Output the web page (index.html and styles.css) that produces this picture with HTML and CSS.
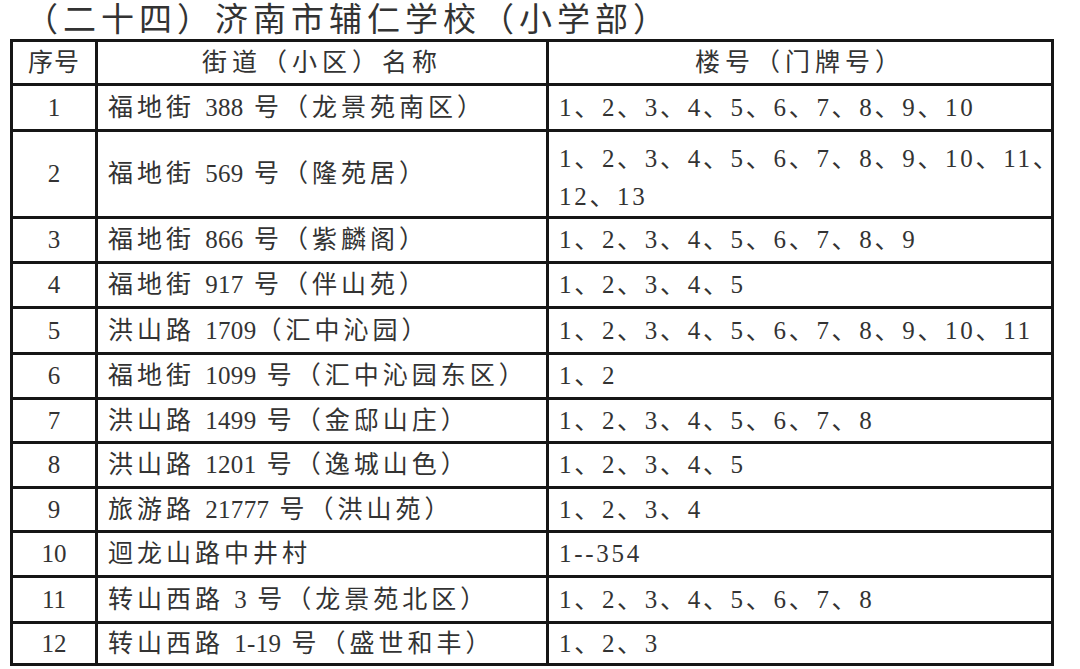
FILE: index.html
```html
<!DOCTYPE html>
<html lang="zh-CN">
<head>
<meta charset="utf-8">
<title>济南市辅仁学校（小学部）</title>
<link rel="stylesheet" href="styles.css">
</head>
<body>
<h1 class="title">（二十四）济南市辅仁学校（小学部）</h1>
<table class="grid">
  <colgroup><col class="c-no"><col class="c-name"><col class="c-bld"></colgroup>
  <thead>
    <tr class="h44"><th class="no hd-no">序号</th><th class="hd">街道（小区）名称</th><th class="hd">楼号（门牌号）</th></tr>
  </thead>
  <tbody>
    <tr class="h46"><td class="no">1</td><td class="name">福地街 <span class="n">388</span> 号（龙景苑南区）</td><td class="bld">1、2、3、4、5、6、7、8、9、10</td></tr>
    <tr class="h87"><td class="no">2</td><td class="name">福地街 <span class="n">569</span> 号（隆苑居）</td><td class="bld two">1、2、3、4、5、6、7、8、9、10、11、<br>12、13</td></tr>
    <tr class="h45"><td class="no">3</td><td class="name">福地街 <span class="n">866</span> 号（紫麟阁）</td><td class="bld">1、2、3、4、5、6、7、8、9</td></tr>
    <tr class="h45"><td class="no">4</td><td class="name">福地街 <span class="n">917</span> 号（伴山苑）</td><td class="bld">1、2、3、4、5</td></tr>
    <tr class="h46"><td class="no">5</td><td class="name">洪山路 <span class="n">1709</span>（汇中沁园）</td><td class="bld">1、2、3、4、5、6、7、8、9、10、11</td></tr>
    <tr class="h45"><td class="no">6</td><td class="name">福地街 <span class="n">1099</span> 号（汇中沁园东区）</td><td class="bld">1、2</td></tr>
    <tr class="h44"><td class="no">7</td><td class="name">洪山路 <span class="n">1499</span> 号（金邸山庄）</td><td class="bld">1、2、3、4、5、6、7、8</td></tr>
    <tr class="h45"><td class="no">8</td><td class="name">洪山路 <span class="n">1201</span> 号（逸城山色）</td><td class="bld">1、2、3、4、5</td></tr>
    <tr class="h44"><td class="no">9</td><td class="name">旅游路 <span class="n">21777</span> 号（洪山苑）</td><td class="bld">1、2、3、4</td></tr>
    <tr class="h45"><td class="no">10</td><td class="name">迴龙山路中井村</td><td class="bld">1--354</td></tr>
    <tr class="h46"><td class="no">11</td><td class="name">转山西路 <span class="n">3</span> 号（龙景苑北区）</td><td class="bld">1、2、3、4、5、6、7、8</td></tr>
    <tr class="h42"><td class="no">12</td><td class="name">转山西路 <span class="n">1-19</span> 号（盛世和丰）</td><td class="bld">1、2、3</td></tr>
  </tbody>
</table>
</body>
</html>
```

FILE: styles.css
```css
html, body {
  margin: 0;
  padding: 0;
  background: #ffffff;
}

body {
  color: #333333;
  font-family: "Liberation Serif", "Noto Sans CJK SC", serif;
  width: 1080px;
  height: 669px;
  overflow: hidden;
}

.title {
  margin: 0;
  height: 39px;
  padding-top: 4px;
  padding-left: 25px;
  font-size: 33px;
  font-weight: 400;
  line-height: 33px;
  letter-spacing: 5px;
  white-space: nowrap;
  box-sizing: border-box;
}

.grid {
  margin-left: 10px;
  width: 1041px;
  border-collapse: collapse;
  table-layout: fixed;
  font-size: 25px;
  line-height: 30px;
}

.c-no { width: 85px; }
.c-name { width: 451px; }
.c-bld { width: 505px; }

.grid th,
.grid td {
  border: 3px solid #161616;
  padding: 0 10px;
  vertical-align: middle;
  font-weight: 400;
  white-space: nowrap;
}

.h42 { height: 42px; }
.h44 { height: 44px; }
.h45 { height: 45px; }
.h46 { height: 46px; }
.h87 { height: 87px; }

.hd {
  text-align: center;
  letter-spacing: 5px;
}

.hd-no {
  letter-spacing: 1px;
}

.no {
  text-align: center;
  padding: 0;
}

.name {
  text-align: left;
  padding-left: 13px;
  letter-spacing: 4px;
}

.name .n {
  letter-spacing: 0.3px;
}

.bld {
  text-align: left;
  padding-left: 10px;
  padding-right: 0;
  letter-spacing: 2.7px;
}

.bld.two {
  line-height: 38px;
  padding-top: 8px;
}
```
